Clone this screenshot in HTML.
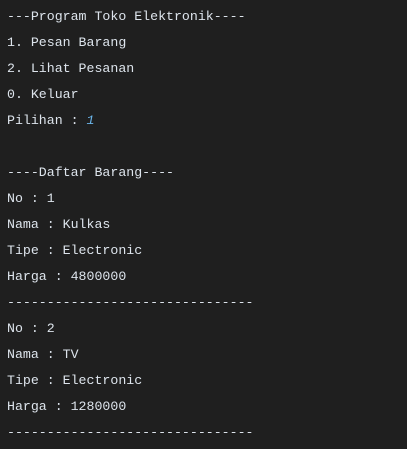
<!DOCTYPE html>
<html><head><style>
html,body{margin:0;padding:0;background:#1f1f1f;width:407px;height:449px;overflow:hidden}
pre{margin:0;padding:4px 0 0 7px;font-family:"Liberation Mono",monospace;font-size:13.25px;line-height:26px;color:#dde4ec}
.b{color:#6ab4e8;font-style:italic}
</style></head><body><pre>---Program Toko Elektronik----
1. Pesan Barang
2. Lihat Pesanan
0. Keluar
Pilihan : <span class="b">1</span>

----Daftar Barang----
No : 1
Nama : Kulkas
Tipe : Electronic
Harga : 4800000
-------------------------------
No : 2
Nama : TV
Tipe : Electronic
Harga : 1280000
-------------------------------</pre></body></html>
